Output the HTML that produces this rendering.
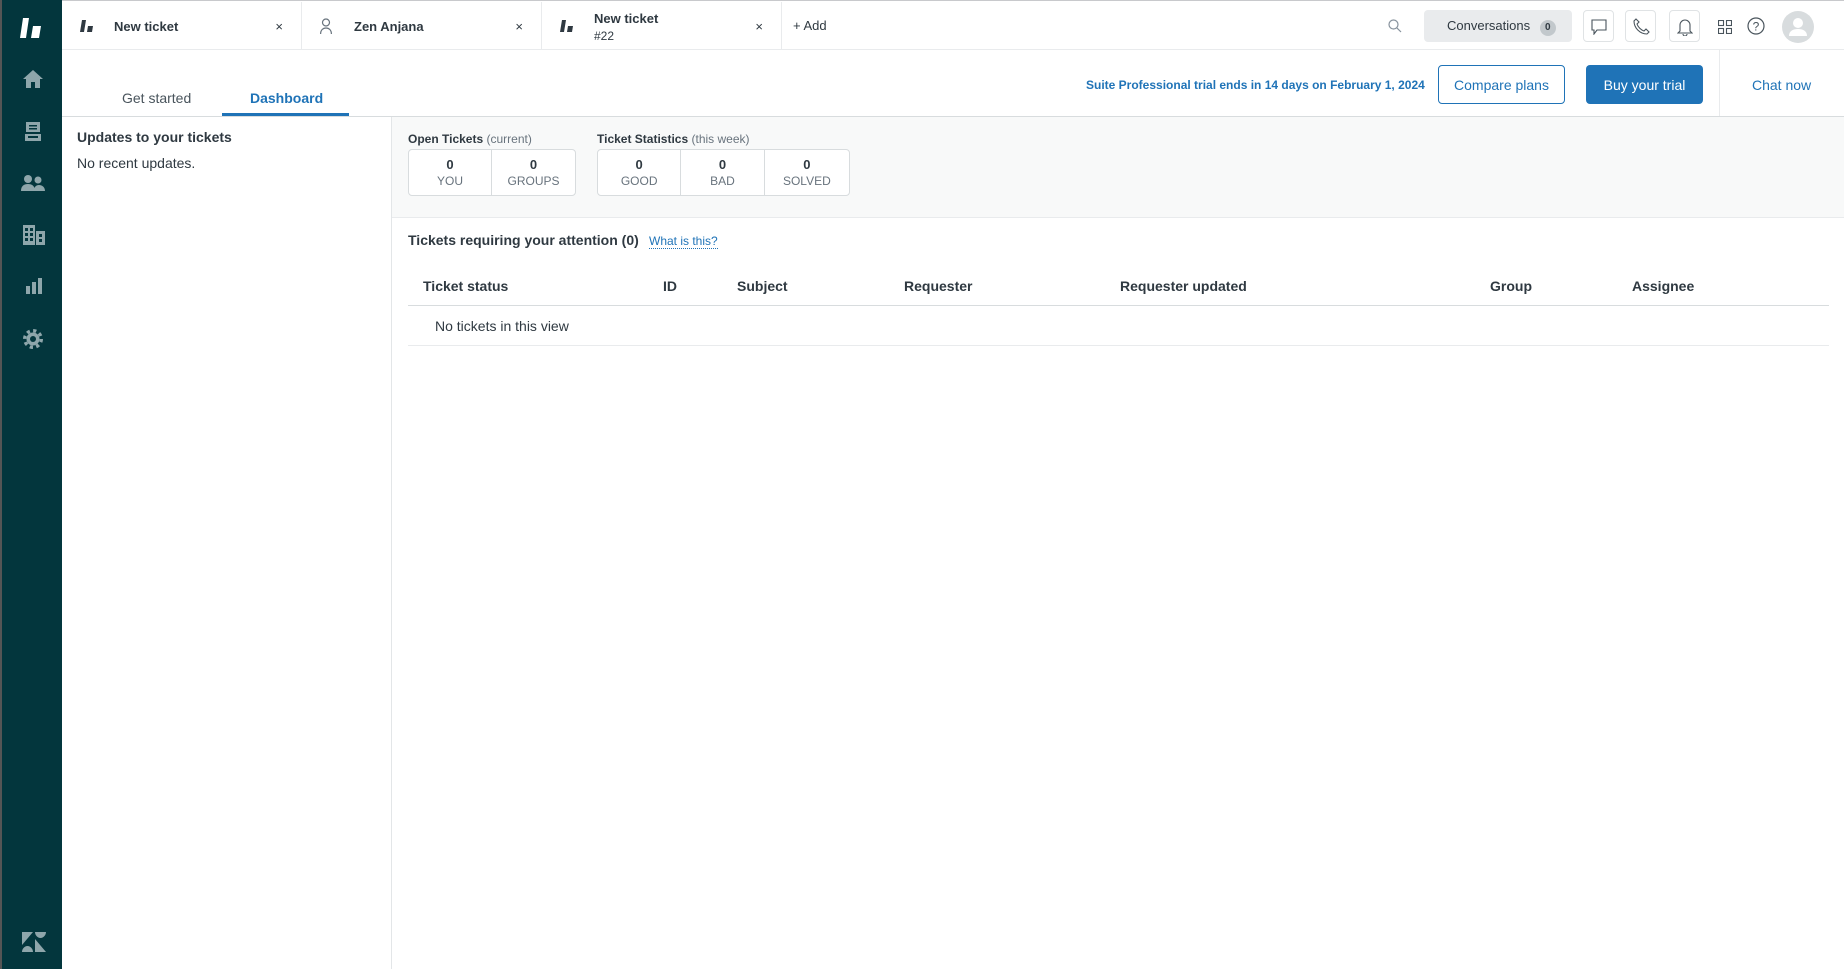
<!DOCTYPE html>
<html><head><meta charset="utf-8">
<style>
*{box-sizing:border-box;margin:0;padding:0}
body{width:1844px;height:969px;overflow:hidden;font-family:"Liberation Sans","DejaVu Sans",sans-serif;color:#2f3941;background:#fff;position:relative}
.abs{position:absolute}
#side{left:0;top:0;width:62px;height:969px;background:#03363d;border-left:2px solid #555}
#side svg{position:absolute;left:21px;fill:#8ea6ab}
#top{left:62px;top:0;right:0;height:50px;border-top:1px solid #c8c9cc;border-bottom:1px solid #e9ebed;background:#fff}
.tab{top:1px;height:49px;width:240px;border-right:1px solid #e9ebed;font-size:13px;font-weight:bold}
.tab .x{position:absolute;right:18px;top:17px;font-weight:normal;font-size:13px;color:#2f3941}
.t{font-size:13px}
#hdr{left:62px;top:50px;right:0;height:67px;border-bottom:1px solid #d8dcde;background:#fff}
.btn{border-radius:4px;font-size:14px;text-align:center;line-height:38px}
#left{left:62px;top:117px;width:330px;height:852px;background:#fff;border-right:1px solid #e3e6e8}
#strip{left:392px;top:117px;right:0;height:101px;background:#f8f9f9;border-bottom:1px solid #e9ebed}
.box{top:32px;height:47px;border:1px solid #d8dcde;border-radius:4px;background:#fff;display:flex}
.box div{width:84px;text-align:center;border-right:1px solid #d8dcde;font-size:12px;color:#68737d;padding-top:7px;line-height:16px}
.box div:last-child{border-right:none}
.box b{display:block;color:#2f3941;font-size:13px}
.th{top:278px;font-size:14px;font-weight:bold}
</style></head><body>
<div id="side" class="abs">
<svg style="top:17px;left:18px" width="26" height="22" viewBox="0 0 26 22"><path fill="#fff" d="M3 1h6l-3 20H0z M13 9h8l-2 12h-8z"/></svg>
<svg style="top:70px" width="20" height="18" viewBox="0 0 20 18"><path d="M10 0L0 9h3v9h5v-6h4v6h5V9h3z"/></svg>
<svg style="top:122px;left:23px" width="16" height="19" viewBox="0 0 16 19"><path d="M1 0h14v10H1z M0 12h16v7H0z" /><path fill="#03363d" d="M4 3h8v1.5H4zM4 6h8v1.5H4zM3 14h10v2H3z"/></svg>
<svg style="top:175px;left:19px" width="24" height="16" viewBox="0 0 24 16"><circle cx="7" cy="4" r="4"/><circle cx="17" cy="5" r="3.5"/><path d="M0 16c0-5 3-7 7-7s7 2 7 7z M13 16c0-4 2-6 5-6s6 2 6 6z"/></svg>
<svg style="top:225px" width="22" height="20" viewBox="0 0 22 20"><path d="M0 0h12v20H0z M13 6h9v14h-9z"/><path fill="#03363d" d="M2 3h3v3H2zM7 3h3v3H7zM2 8h3v3H2zM7 8h3v3H7zM2 13h3v3H2zM7 13h3v3H7zM16 9h3v3h-3zM16 14h3v3h-3z"/></svg>
<svg style="top:278px;left:24px" width="16" height="16" viewBox="0 0 16 16"><path d="M0 8h4v8H0zM6 4h4v12H6zM12 0h4v16h-4z"/></svg>
<svg style="top:329px" width="20" height="20" viewBox="0 0 20 20"><circle cx="10" cy="10" r="6.5"/><circle cx="10" cy="10" r="8.3" fill="none" stroke="#8ea6ab" stroke-width="3.4" stroke-dasharray="3.2 3.3"/><circle cx="10" cy="10" r="3" fill="#03363d"/></svg>
<svg style="top:932px;left:20px" width="24" height="20" viewBox="0 0 24 20"><path d="M0 0h11L0 13z M13 7v13h11z M13 0c0 3 2.5 6 5.5 6S24 3 24 0z M11 20c0-3-2.5-6-5.5-6S0 17 0 20z"/></svg>
</div>

<div id="top" class="abs">
<div class="tab abs" style="left:0">
 <svg class="abs" style="left:18px;top:18px" width="14" height="12" viewBox="0 0 14 12"><path fill="#2f3941" d="M2 0h4l-2 12H0z M8 6h5l-1 6H7z"/></svg>
 <span class="abs" style="left:52px;top:17px">New ticket</span><span class="x">×</span></div>
<div class="tab abs" style="left:240px">
 <svg class="abs" style="left:18px;top:16px" width="12" height="16" viewBox="0 0 12 16"><circle cx="6" cy="4.5" r="3.5" fill="none" stroke="#68737d" stroke-width="1.2"/><path d="M.6 16c0-4 2.4-6 5.4-6s5.4 2 5.4 6" fill="none" stroke="#68737d" stroke-width="1.2"/></svg>
 <span class="abs" style="left:52px;top:17px">Zen Anjana</span><span class="x">×</span></div>
<div class="tab abs" style="left:480px">
 <svg class="abs" style="left:18px;top:18px" width="14" height="12" viewBox="0 0 14 12"><path fill="#2f3941" d="M2 0h4l-2 12H0z M8 6h5l-1 6H7z"/></svg>
 <span class="abs" style="left:52px;top:9px">New ticket</span><span class="abs" style="left:52px;top:27px;font-weight:normal;font-size:12px">#22</span><span class="x">×</span></div>
<span class="abs t" style="left:731px;top:17px">+ Add</span>
<svg class="abs" style="left:1326px;top:18px" width="14" height="14" viewBox="0 0 14 14"><circle cx="5.5" cy="5.5" r="4.5" fill="none" stroke="#87929d" stroke-width="1.2"/><path d="M9 9l4 4" stroke="#87929d" stroke-width="1.2"/></svg>
<div class="abs" style="left:1362px;top:9px;width:148px;height:32px;background:#e9ebed;border-radius:4px;font-size:13px;line-height:32px;padding-left:23px">Conversations <span style="display:inline-block;width:16px;height:16px;border-radius:8px;background:#c2c8cc;font-size:10px;line-height:16px;text-align:center;margin-left:6px;font-weight:bold">0</span></div>
<div class="abs" style="left:1521px;top:9px;width:31px;height:32px;border:1px solid #e0e3e5;border-radius:4px"><svg style="margin:8px 7px" width="16" height="16" viewBox="0 0 16 16"><path d="M1 1h14v10H6l-3 4v-4H1z" fill="none" stroke="#49545c" stroke-width="1.1"/></svg></div>
<div class="abs" style="left:1563px;top:9px;width:31px;height:32px;border:1px solid #e0e3e5;border-radius:4px"><svg style="margin:7px" width="17" height="17" viewBox="0 0 17 17"><path d="M3 1l3 3-2 2c1 3 4 6 7 7l2-2 3 3-2 2C7 16 1 10 1 3z" fill="none" stroke="#49545c" stroke-width="1.1"/></svg></div>
<div class="abs" style="left:1607px;top:9px;width:31px;height:32px;border:1px solid #e0e3e5;border-radius:4px"><svg style="margin:7px 7px" width="16" height="18" viewBox="0 0 16 18"><path d="M3 13V7a5 5 0 0110 0v6l2 2H1z M6 16a2 2 0 004 0" fill="none" stroke="#49545c" stroke-width="1.1"/></svg></div>
<svg class="abs" style="left:1656px;top:19px" width="14" height="14" viewBox="0 0 14 14"><g fill="none" stroke="#49545c" stroke-width="1.1"><rect x=".5" y=".5" width="5" height="5"/><rect x="8.5" y=".5" width="5" height="5"/><rect x=".5" y="8.5" width="5" height="5"/><rect x="8.5" y="8.5" width="5" height="5"/></g></svg>
<svg class="abs" style="left:1685px;top:16px" width="18" height="18" viewBox="0 0 18 18"><circle cx="9" cy="9" r="8" fill="none" stroke="#49545c" stroke-width="1.2"/><text x="9" y="13.5" font-size="12" text-anchor="middle" fill="#49545c" font-family="Liberation Sans">?</text></svg>
<div class="abs" style="left:1720px;top:10px;width:32px;height:32px;border-radius:16px;background:#d8dcde;overflow:hidden"><svg width="32" height="32" viewBox="0 0 32 32"><circle cx="16" cy="12" r="5" fill="#fff"/><path d="M7 25c0-5 4-7 9-7s9 2 9 7z" fill="#fff"/></svg></div>
</div>

<div id="hdr" class="abs">
<span class="abs" style="left:60px;top:40px;font-size:14px;color:#49545c">Get started</span>
<span class="abs" style="left:188px;top:40px;font-size:14px;color:#1f73b7;font-weight:bold">Dashboard</span>
<div class="abs" style="left:160px;top:63px;width:127px;height:3px;background:#1f73b7"></div>
<span class="abs" style="left:1024px;top:28px;font-size:12px;color:#1f73b7;font-weight:bold">Suite Professional trial ends in 14 days on February 1, 2024</span>
<div class="abs btn" style="left:1376px;top:15px;width:127px;height:39px;border:1px solid #1f73b7;color:#1f73b7;background:#fff">Compare plans</div>
<div class="abs btn" style="left:1524px;top:15px;width:117px;height:39px;background:#1f73b7;color:#fff;line-height:40px">Buy your trial</div>
<div class="abs" style="left:1657px;top:0;width:1px;height:66px;background:#e9ebed"></div>
<span class="abs" style="left:1690px;top:27px;font-size:14px;color:#1f73b7">Chat now</span>
</div>

<div id="left" class="abs">
<span class="abs" style="left:15px;top:12px;font-size:14px;font-weight:bold">Updates to your tickets</span>
<span class="abs" style="left:15px;top:38px;font-size:14px">No recent updates.</span>
</div>

<div id="strip" class="abs">
<span class="abs" style="left:16px;top:15px;font-size:12px"><b>Open Tickets</b> <span style="color:#68737d">(current)</span></span>
<div class="box abs" style="left:16px;width:168px"><div><b>0</b>YOU</div><div><b>0</b>GROUPS</div></div>
<span class="abs" style="left:205px;top:15px;font-size:12px"><b>Ticket Statistics</b> <span style="color:#68737d">(this week)</span></span>
<div class="box abs" style="left:205px;width:253px"><div><b>0</b>GOOD</div><div><b>0</b>BAD</div><div style="width:85px"><b>0</b>SOLVED</div></div>
</div>

<span class="abs" style="left:408px;top:232px;font-size:14px;font-weight:bold">Tickets requiring your attention (0)</span>
<span class="abs" style="left:649px;top:234px;font-size:12px;color:#1f73b7;border-bottom:1px dotted #1f73b7">What is this?</span>
<span class="abs th" style="left:423px">Ticket status</span>
<span class="abs th" style="left:663px">ID</span>
<span class="abs th" style="left:737px">Subject</span>
<span class="abs th" style="left:904px">Requester</span>
<span class="abs th" style="left:1120px">Requester updated</span>
<span class="abs th" style="left:1490px">Group</span>
<span class="abs th" style="left:1632px">Assignee</span>
<div class="abs" style="left:408px;top:305px;width:1421px;height:1px;background:#d8dcde"></div>
<span class="abs" style="left:435px;top:318px;font-size:14px">No tickets in this view</span>
<div class="abs" style="left:408px;top:345px;width:1421px;height:1px;background:#e9ebed"></div>
</body></html>
